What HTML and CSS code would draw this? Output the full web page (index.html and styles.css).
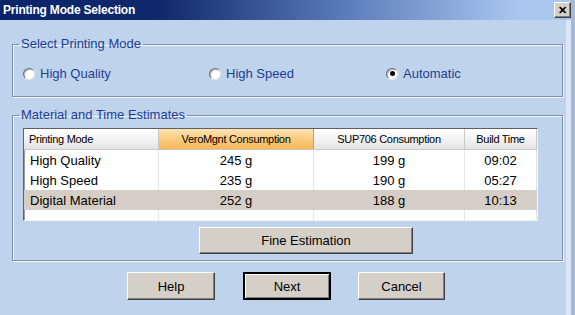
FILE: index.html
```html
<!DOCTYPE html>
<html lang="en">
<head>
    <meta charset="UTF-8">
    <title>Printing Mode Selection</title>
    <link rel="stylesheet" href="styles.css">
</head>
<body>
    <div class="window">
        <!-- Title Bar -->
        <div class="titlebar">
            <span class="title">Printing Mode Selection</span>
            <span class="close-btn">&#x2715;</span>
        </div>

        <div class="dialog">
            <!-- Printing mode -->
            <fieldset class="group mode-group">
                <legend>Select Printing Mode</legend>
                <div class="radio-row">
                    <label class="radio"><span class="dot"></span>High Quality</label>
                    <label class="radio"><span class="dot"></span>High Speed</label>
                    <label class="radio"><span class="dot checked"></span>Automatic</label>
                </div>
            </fieldset>

            <!-- Estimates -->
            <fieldset class="group estimate-group">
                <legend>Material and Time Estimates</legend>
                <div class="grid-wrap">
                    <table class="grid">
                        <thead>
                            <tr>
                                <th class="col-mode">Printing Mode</th>
                                <th class="col-vero sorted">VeroMgnt Consumption</th>
                                <th class="col-sup">SUP706 Consumption</th>
                                <th class="col-time">Build Time</th>
                            </tr>
                        </thead>
                        <tbody>
                            <tr>
                                <td class="name">High Quality</td>
                                <td>245 g</td>
                                <td>199 g</td>
                                <td>09:02</td>
                            </tr>
                            <tr>
                                <td class="name">High Speed</td>
                                <td>235 g</td>
                                <td>190 g</td>
                                <td>05:27</td>
                            </tr>
                            <tr class="selected">
                                <td class="name">Digital Material</td>
                                <td>252 g</td>
                                <td>188 g</td>
                                <td>10:13</td>
                            </tr>
                            <tr class="empty">
                                <td></td><td></td><td></td><td></td>
                            </tr>
                        </tbody>
                    </table>
                </div>
                <button class="btn fine-btn">Fine Estimation</button>
            </fieldset>

            <!-- Dialog buttons -->
            <div class="actions">
                <button class="btn">Help</button>
                <button class="btn default">Next</button>
                <button class="btn cancel">Cancel</button>
            </div>
        </div>
    </div>
</body>
</html>
```

FILE: styles.css
```css
body {
    margin: 0;
    padding: 0;
    font-family: "Liberation Sans", Arial, sans-serif;
    background: #bfd3ec;
}

.window {
    width: 575px;
    height: 315px;
    box-sizing: border-box;
    background: #bfd3ec;
    border-right: 4px solid #a7bad3;
    box-shadow: inset -5px 0 0 #dbe7f6;
    overflow: hidden;
}

/* Title Bar */
.titlebar {
    height: 20px;
    margin-right: -4px;
    display: flex;
    align-items: center;
    justify-content: space-between;
    padding: 0 4px 0 3px;
    background: linear-gradient(to right, #0a246a 0%, #10296b 28%, #5a7cba 60%, #a8c6ee 90%, #a8c6ee 100%);
}

.title {
    color: #fff;
    font-weight: bold;
    font-size: 12px;
    letter-spacing: -0.2px;
}

.close-btn {
    width: 17px;
    height: 16px;
    box-sizing: border-box;
    background: #d4d0c8;
    border: 1px solid;
    border-color: #fff #404040 #404040 #fff;
    box-shadow: inset -1px -1px 0 #808080;
    font-size: 11px;
    font-weight: bold;
    line-height: 14px;
    text-align: center;
    color: #000;
}

.dialog {
    padding: 17px 8px 0 12px;
}

/* Group boxes */
.group {
    margin: 0;
    width: 551px;
    box-sizing: border-box;
    border: 1px solid #7d91ad;
    box-shadow: inset 1px 1px 0 #eef4fb, 1px 1px 0 #eef4fb;
    padding: 0;
}

.group legend {
    margin-left: -4px;
    padding: 0 2px;
    font-size: 13px;
    line-height: 14px;
    color: #1d3f92;
}

.mode-group {
    padding: 15px 10px 15px 10px;
}

.radio-row {
    display: grid;
    grid-template-columns: 186px 177px auto;
}

.radio {
    display: flex;
    align-items: center;
    gap: 5px;
    font-size: 13px;
    line-height: 15px;
    color: #1d3f92;
}

.dot {
    width: 12px;
    height: 12px;
    box-sizing: border-box;
    border-radius: 50%;
    background: #fff;
    border: 1px solid;
    border-color: #6f6f6f #e6e6e6 #e6e6e6 #6f6f6f;
    box-shadow: inset 1px 1px 0 #b0b0b0;
    display: flex;
    align-items: center;
    justify-content: center;
}

.dot.checked::after {
    content: "";
    width: 5px;
    height: 5px;
    border-radius: 50%;
    background: #000;
}

.estimate-group {
    margin-top: 11px;
    padding: 6px 10px 6px 10px;
}

/* Data grid */
.grid-wrap {
    width: 515px;
    height: 93px;
    box-sizing: border-box;
    border: 1px solid;
    border-color: #5f5f5f #f4f4f4 #f4f4f4 #5f5f5f;
    box-shadow: inset 1px 1px 0 #9a9a9a;
    background: #fff;
    overflow: hidden;
}

.grid {
    width: 513px;
    border-collapse: collapse;
    table-layout: fixed;
    font-size: 13px;
    color: #000;
}

.grid th {
    height: 20px;
    padding: 0;
    font-weight: normal;
    font-size: 11px;
    letter-spacing: -0.3px;
    text-align: center;
    background: linear-gradient(#ffffff, #f0f0f0 60%, #e3e3e3);
    border-right: 1px solid #c9c9c9;
    border-bottom: 1px solid #c9c9c9;
}

.grid th.col-mode {
    text-align: left;
    padding-left: 5px;
}

.grid th.sorted {
    background: linear-gradient(#fde3b3, #f9c97a 55%, #f6b757);
    border-right-color: #d99a3a;
}

.col-mode { width: 129px; }
.col-vero { width: 154px; }
.col-sup { width: 150px; }

.grid td {
    height: 20px;
    padding: 0;
    text-align: center;
    border-right: 1px solid #e4e4e4;
}

.grid td.name {
    text-align: left;
    padding-left: 6px;
}

.grid tr.selected td {
    background: #d5cec6;
    border-right-color: #d5cec6;
}

.grid tr.empty td {
    height: 11px;
}

/* Buttons */
.btn {
    height: 28px;
    box-sizing: border-box;
    background: #d4d0c8;
    border: 1px solid;
    border-color: #ffffff #404040 #404040 #ffffff;
    box-shadow: inset -1px -1px 0 #808080;
    font-family: "Liberation Sans", Arial, sans-serif;
    font-size: 13px;
    color: #000;
    padding: 0;
}

.fine-btn {
    display: block;
    width: 214px;
    height: 27px;
    margin: 6px 0 0 176px;
}

.actions {
    display: flex;
    gap: 28px;
    margin-top: 11px;
    padding-left: 115px;
}

.actions .btn {
    width: 88px;
}

.actions .cancel {
    width: 87px;
    margin-left: -1px;
}

.btn.default {
    border: 2px solid #000;
    box-shadow: inset 1px 1px 0 #fff, inset -1px -1px 0 #808080;
}
```
